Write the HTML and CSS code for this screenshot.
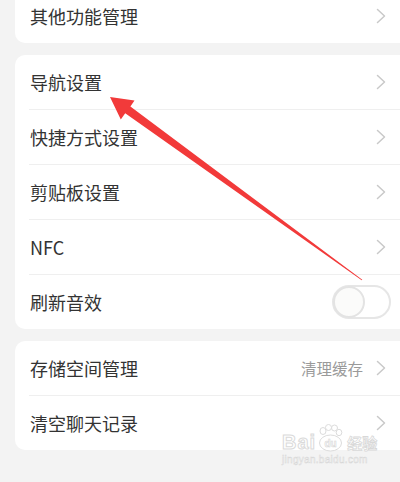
FILE: index.html
```html
<!DOCTYPE html>
<html lang="zh-CN">
<head>
<meta charset="utf-8">
<link rel="stylesheet" href="styles.css">
</head>
<body>
<div class="page">
  <div class="card">
    <div class="row"><span class="label">其他功能管理</span><svg class="chev" viewBox="0 0 10 16"><path d="M1.5 1.5 L8.5 8 L1.5 14.5"/></svg></div>
  </div>
  <div class="card">
    <div class="row"><span class="label">导航设置</span><svg class="chev" viewBox="0 0 10 16"><path d="M1.5 1.5 L8.5 8 L1.5 14.5"/></svg></div>
    <div class="row"><span class="label">快捷方式设置</span><svg class="chev" viewBox="0 0 10 16"><path d="M1.5 1.5 L8.5 8 L1.5 14.5"/></svg></div>
    <div class="row"><span class="label">剪贴板设置</span><svg class="chev" viewBox="0 0 10 16"><path d="M1.5 1.5 L8.5 8 L1.5 14.5"/></svg></div>
    <div class="row"><span class="label">NFC</span><svg class="chev" viewBox="0 0 10 16"><path d="M1.5 1.5 L8.5 8 L1.5 14.5"/></svg></div>
    <div class="row row-toggle"><span class="label">刷新音效</span><span class="toggle"><span class="knob"></span></span></div>
  </div>
  <div class="card">
    <div class="row"><span class="label">存储空间管理</span><span class="value">清理缓存</span><svg class="chev" viewBox="0 0 10 16"><path d="M1.5 1.5 L8.5 8 L1.5 14.5"/></svg></div>
    <div class="row"><span class="label">清空聊天记录</span><svg class="chev" viewBox="0 0 10 16"><path d="M1.5 1.5 L8.5 8 L1.5 14.5"/></svg></div>
  </div>
</div>

<svg class="arrow" viewBox="0 0 400 482" width="400" height="482">
  <polygon points="110,97 134.5,100.5 130.4,106.6 362.3,279.8 361.7,280.2 125.2,113.2 120.8,119.4" fill="#f23a3a"/>
</svg>

<div class="watermark">
  <div class="wm-top">
    <span class="wm-bai">Bai</span>
    <svg class="wm-paw" viewBox="0 0 26 28" width="26" height="28">
      <g fill="#fff" stroke="#dcdcdc" stroke-width="1">
        <ellipse cx="6" cy="7" rx="3" ry="3.5"/>
        <ellipse cx="11.5" cy="3.5" rx="3" ry="3"/>
        <ellipse cx="17.5" cy="4" rx="3" ry="3"/>
        <ellipse cx="22" cy="8.5" rx="2.8" ry="3.2"/>
        <ellipse cx="13.5" cy="19" rx="11" ry="8"/>
      </g>
      <text x="13.5" y="23" text-anchor="middle" class="wm-du">du</text>
    </svg>
    <span class="wm-jy">经验</span>
  </div>
  <div class="wm-url">jingyan.baidu.com</div>
</div>
</body>
</html>
```

FILE: styles.css
```css
html, body {
  margin: 0;
  padding: 0;
}
body {
  width: 400px;
  height: 482px;
  overflow: hidden;
  background: #f3f3f3;
  font-family: "Noto Sans CJK SC", "Noto Sans", sans-serif;
  position: relative;
}
.page {
  display: flex;
  flex-direction: column;
  gap: 12px;
  margin-top: -11px;
  padding-left: 15px;
}
.card {
  background: #ffffff;
  border-radius: 10px 0 0 10px;
}
.row {
  height: 54px;
  margin-left: 14px;
  padding: 0 14px 0 1px;
  display: flex;
  align-items: center;
}
.row + .row {
  border-top: 1px solid #efefef;
}
.label {
  flex: 1;
  font-size: 18px;
  color: #333333;
  letter-spacing: 0;
}
.value {
  font-size: 15.5px;
  color: #9a9a9a;
  margin-right: 13px;
}
.chev {
  width: 10px;
  height: 16px;
  fill: none;
  stroke: #c9c9c9;
  stroke-width: 1.5;
  stroke-linecap: round;
  stroke-linejoin: round;
}
.row-toggle {
  padding-right: 9px;
}
.toggle {
  width: 59px;
  height: 34px;
  box-sizing: border-box;
  border: 2px solid #e6e6e6;
  border-radius: 17px;
  background: #ffffff;
  display: flex;
  align-items: center;
}
.knob {
  width: 32px;
  height: 32px;
  box-sizing: border-box;
  margin-left: -1px;
  border-radius: 50%;
  background: #fbfbfa;
  border: 2px solid #e3e3e3;
}
.arrow {
  position: absolute;
  left: 0;
  top: 0;
  pointer-events: none;
}
.watermark {
  position: absolute;
  left: 282px;
  top: 424px;
  display: flex;
  flex-direction: column;
  align-items: flex-start;
  pointer-events: none;
}
.wm-top {
  display: flex;
  align-items: flex-end;
  gap: 1px;
}
.wm-bai {
  font-family: "Liberation Sans", sans-serif;
  font-weight: bold;
  font-size: 20px;
  line-height: 20px;
  color: #ffffff;
  -webkit-text-stroke: 1px #dadada;
  letter-spacing: 1px;
}
.wm-du {
  font-family: "Liberation Sans", sans-serif;
  font-weight: bold;
  font-size: 10px;
  fill: #ffffff;
  stroke: #d6d6d6;
  stroke-width: 0.6;
}
.wm-jy {
  font-size: 15px;
  line-height: 18px;
  color: #ffffff;
  -webkit-text-stroke: 0.8px #d8d8d8;
  margin-left: 3px;
  font-weight: bold;
}
.wm-url {
  font-family: "Liberation Sans", sans-serif;
  font-size: 10px;
  color: #ffffff;
  -webkit-text-stroke: 0.5px #d6d6d6;
  margin-top: 2px;
  letter-spacing: 0.3px;
}
```
